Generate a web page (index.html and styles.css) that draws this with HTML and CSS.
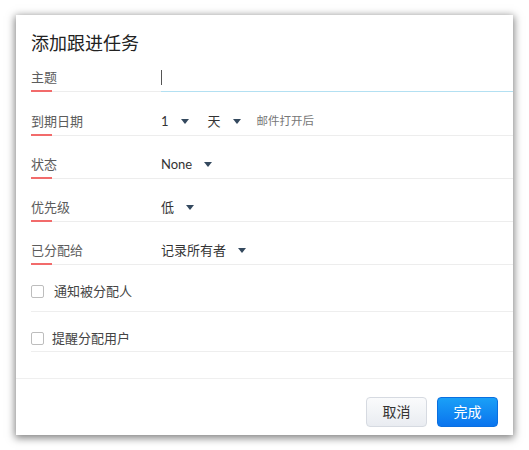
FILE: index.html
```html
<!DOCTYPE html>
<html lang="zh">
<head>
<meta charset="utf-8">
<title>添加跟进任务</title>
<link rel="stylesheet" href="styles.css">
</head>
<body>
<div class="dialog">
  <div class="title">添加跟进任务</div>
  <div class="body">
    <div class="row row-first">
      <div class="label">主题</div>
      <div class="value input"><span class="cursor"></span></div>
    </div>
    <div class="row row-second">
      <div class="label">到期日期</div>
      <div class="value">
        <span class="select">1<span class="caret"></span></span>
        <span class="select sel-day">天<span class="caret"></span></span>
        <span class="hint">邮件打开后</span>
      </div>
    </div>
    <div class="row">
      <div class="label">状态</div>
      <div class="value"><span class="select">None<span class="caret"></span></span></div>
    </div>
    <div class="row">
      <div class="label">优先级</div>
      <div class="value"><span class="select">低<span class="caret"></span></span></div>
    </div>
    <div class="row">
      <div class="label">已分配给</div>
      <div class="value"><span class="select">记录所有者<span class="caret"></span></span></div>
    </div>
    <div class="check-row check-one">
      <span class="box"></span><span class="check-text wide">通知被分配人</span>
    </div>
    <div class="check-row check-two">
      <span class="box"></span><span class="check-text">提醒分配用户</span>
    </div>
  </div>
  <div class="footer">
    <button class="btn btn-cancel">取消</button>
    <button class="btn btn-done">完成</button>
  </div>
</div>
</body>
</html>
```
FILE: styles.css
```css
html, body {
  margin: 0;
  padding: 0;
  background: #ffffff;
}
body {
  font-family: Lato, "Noto Sans CJK SC", sans-serif;
  padding: 15px 16px 15px 16px;
}
.dialog {
  width: 497px;
  height: 420px;
  background: #fff;
  box-shadow: 0 2px 8px 1px rgba(0, 0, 0, 0.5);
  display: flex;
  flex-direction: column;
}
.title {
  padding: 14px 15px 0 15px;
  font-size: 18px;
  line-height: 28px;
  color: #222;
}
.body {
  padding-left: 15px;
}
.row {
  display: flex;
  height: 42px;
  border-bottom: 1px solid #ededed;
}
.row-first {
  height: 34px;
}
.row-second {
  height: 43px;
}
.label {
  position: relative;
  width: 130px;
  flex: none;
  padding-top: 18px;
  font-size: 13px;
  line-height: 20px;
  color: #5c5c5c;
}
.row-first .label {
  padding-top: 10px;
}
.row-second .label,
.row-second .value {
  padding-top: 19px;
}
.label::after {
  content: "";
  position: absolute;
  left: 0;
  bottom: -1px;
  width: 21px;
  height: 2px;
  background: #f26b6b;
}
.value {
  flex: 1;
  display: flex;
  align-items: flex-start;
  padding-top: 18px;
  font-size: 13px;
  line-height: 20px;
  color: #333;
}
.input {
  padding-top: 10px;
  margin-bottom: -1px;
  border-bottom: 1px solid #b3e0f2;
}
.cursor {
  display: block;
  width: 1px;
  height: 15px;
  margin-top: 3px;
  background: #555;
}
.select {
  display: inline-flex;
  align-items: center;
  height: 20px;
}
.caret {
  display: inline-block;
  width: 0;
  height: 0;
  margin-left: 12px;
  border-left: 4px solid transparent;
  border-right: 4px solid transparent;
  border-top: 5px solid #34495e;
}
.sel-day {
  margin-left: 19px;
}
.hint {
  margin-left: 16px;
  font-size: 11.5px;
  line-height: 20px;
  color: #777;
}
.check-row {
  display: flex;
  align-items: flex-start;
  border-bottom: 1px solid #eeeeee;
  padding-top: 16px;
  font-size: 13px;
  line-height: 20px;
  color: #444;
}
.check-one {
  height: 30px;
}
.check-two {
  height: 23px;
}
.box {
  width: 11px;
  height: 11px;
  margin-top: 4px;
  border: 1px solid #bdbdbd;
  border-radius: 2px;
  flex: none;
}
.check-text {
  margin-left: 8px;
}
.check-text.wide {
  margin-left: 10px;
}
.footer {
  margin-top: 26px;
  border-top: 1px solid #efefef;
  display: flex;
  justify-content: flex-end;
  gap: 10px;
  padding: 18px 15px 0 0;
}
.btn {
  width: 61px;
  height: 30px;
  border-radius: 4px;
  font-family: Lato, "Noto Sans CJK SC", sans-serif;
  font-size: 14px;
  line-height: 28px;
  padding: 0;
  cursor: pointer;
}
.btn-cancel {
  background: linear-gradient(#fafbfc, #e9ecf1);
  border: 1px solid #d6dae1;
  color: #333;
}
.btn-done {
  background: linear-gradient(#1aa0f7, #0a74ee);
  border: 1px solid #0a6fe0;
  color: #fff;
}
```
